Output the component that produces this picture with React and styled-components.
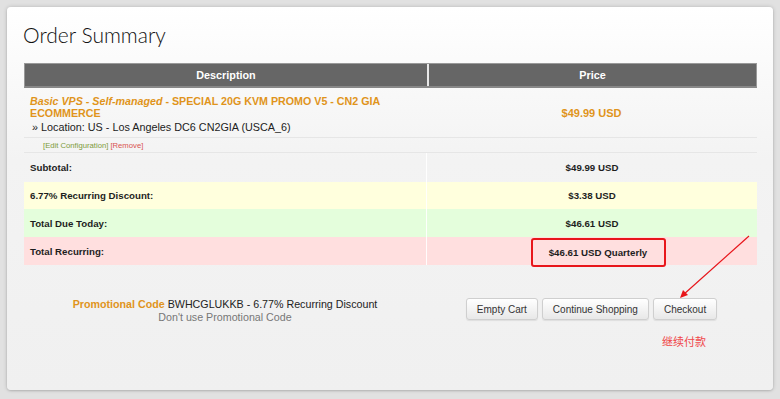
import React from 'react'
import styled, { createGlobalStyle } from 'styled-components'

const GlobalStyle = createGlobalStyle`
   html, body {
      margin: 0;
      padding: 0;
      background: #e1e1e1;
   }
   body {
      font-family: "Liberation Sans", Arial, sans-serif;
      color: #333;
   }
`

const Page = styled.div`
   padding: 7px 7px 9px 7px;
   height: 399px;
   box-sizing: border-box;
`

const Panel = styled.div`
   position: relative;
   height: 383px;
   box-sizing: border-box;
   padding: 15px 16px 0 17px;
   border-radius: 4px;
   background: linear-gradient(to bottom, #ffffff 0%, #f3f3f3 40%, #f0f0f0 100%);
   box-shadow: 0 0 4px rgba(0, 0, 0, 0.18), 0 1px 2px rgba(0, 0, 0, 0.12);
`

const Title = styled.h1`
   margin: 0 0 16px -1px;
   font-family: Lato, sans-serif;
   font-weight: 300;
   font-size: 21px;
   line-height: 25px;
   color: #111;
`

const Table = styled.div`
   display: flex;
   flex-direction: column;
`

const Row = styled.div`
   display: grid;
   grid-template-columns: 402px 1fr;
   height: ${p => p.h || 28}px;
   background: ${p => p.bg || 'transparent'};
   border-bottom: ${p => (p.line ? '1px solid #e6e6e6' : 'none')};
`

const HeadRow = styled.div`
   display: grid;
   grid-template-columns: 402px 1fr;
   height: 25px;
   border: 1px solid #999;
   border-bottom: 2px solid #888;
   box-sizing: border-box;
   margin-bottom: 1px;
`

const HeadCell = styled.div`
   background: #666;
   color: #fff;
   font-weight: bold;
   font-size: 10.8px;
   display: flex;
   align-items: center;
   justify-content: center;
   border-left: ${p => (p.right ? '2px solid #e8e8e8' : 'none')};
`

const Cell = styled.div`
   display: flex;
   align-items: center;
   justify-content: ${p => (p.center ? 'center' : 'flex-start')};
   padding: ${p => (p.center ? '0' : '0 6px')};
   border-left: ${p => (p.right ? '1px solid rgba(255,255,255,0.9)' : 'none')};
   font-size: 9.7px;
   font-weight: bold;
   color: #1e1e1e;
`

const ProductCell = styled.div`
   padding: 6px 6px 2px 6px;
`

const ProductName = styled.div`
   color: #e0941b;
   font-weight: bold;
   font-size: 10.7px;
   line-height: 12px;
   em {
      font-style: italic;
   }
`

const Location = styled.div`
   margin-top: 1px;
   padding-left: 2px;
   color: #222;
   font-size: 10.8px;
   line-height: 14px;
`

const PriceCell = styled.div`
   display: flex;
   align-items: center;
   justify-content: center;
   color: #e0941b;
   font-weight: bold;
   font-size: 11px;
`

const Actions = styled.div`
   padding: 0 0 0 19px;
   font-size: 7.7px;
   display: flex;
   align-items: center;
   gap: 2px;
`

const ActionLink = styled.span`
   color: ${p => (p.danger ? '#d9534f' : '#7d9b3b')};
`

const RecurringBox = styled.span`
   display: inline-flex;
   align-items: center;
   justify-content: center;
   width: 131px;
   height: 25px;
   margin: 1px 0 -2px 12px;
   align-self: flex-start;
   border: 2px solid #e8161b;
   border-radius: 3px;
   font-weight: bold;
`

const Bottom = styled.div`
   display: grid;
   grid-template-columns: 402px 1fr;
   margin-top: 33px;
`

const Promo = styled.div`
   text-align: center;
   font-size: 10.7px;
   line-height: 13px;
   color: #222;
`

const PromoLabel = styled.span`
   color: #e0941b;
   font-weight: bold;
`

const Muted = styled.div`
   color: #777;
`

const ButtonCol = styled.div`
   display: flex;
   flex-direction: column;
   align-items: center;
`

const Buttons = styled.div`
   display: flex;
   gap: 4px;
`

const Button = styled.button`
   height: 22px;
   padding: 0 10px;
   font-family: "Liberation Sans", Arial, sans-serif;
   font-size: 10px;
   color: #333;
   border: 1px solid #cfcfcf;
   border-radius: 3px;
   background: linear-gradient(to bottom, #ffffff 0%, #e8e8e8 100%);
   box-shadow: 0 1px 1px rgba(0, 0, 0, 0.08);
   cursor: pointer;
`

const Note = styled.div`
   align-self: stretch;
   display: flex;
   justify-content: flex-end;
   padding-right: 51px;
   margin-top: 13px;
   color: #f0474a;
   font-size: 11px;
   font-family: "Noto Sans CJK SC", sans-serif;
`

const Arrow = styled.svg`
   position: absolute;
   left: 670px;
   top: 228px;
   overflow: visible;
`

export default function App() {
   return (
      <Page>
         <GlobalStyle />
         <Panel>
            <Title>Order Summary</Title>
            <Table>
               <HeadRow>
                  <HeadCell>Description</HeadCell>
                  <HeadCell right>Price</HeadCell>
               </HeadRow>
               <Row h={48} line>
                  <ProductCell>
                     <ProductName>
                        <em>Basic VPS - Self-managed</em> - SPECIAL 20G KVM PROMO V5 - CN2 GIA ECOMMERCE
                     </ProductName>
                     <Location>» Location: US - Los Angeles DC6 CN2GIA (USCA_6)</Location>
                  </ProductCell>
                  <PriceCell>$49.99 USD</PriceCell>
               </Row>
               <Row h={14} line>
                  <Actions>
                     <ActionLink>[Edit Configuration]</ActionLink>
                     <ActionLink danger>[Remove]</ActionLink>
                  </Actions>
                  <div />
               </Row>
               <Row h={29}>
                  <Cell>Subtotal:</Cell>
                  <Cell center right>$49.99 USD</Cell>
               </Row>
               <Row h={27} bg="#ffffdd">
                  <Cell>6.77% Recurring Discount:</Cell>
                  <Cell center right>$3.38 USD</Cell>
               </Row>
               <Row h={28} bg="#e4fedc">
                  <Cell>Total Due Today:</Cell>
                  <Cell center right>$46.61 USD</Cell>
               </Row>
               <Row h={28} bg="#ffdfdf">
                  <Cell>Total Recurring:</Cell>
                  <Cell center right>
                     <RecurringBox>$46.61 USD Quarterly</RecurringBox>
                  </Cell>
               </Row>
            </Table>
            <Bottom>
               <Promo>
                  <PromoLabel>Promotional Code</PromoLabel> BWHCGLUKKB - 6.77% Recurring Discount
                  <Muted>Don't use Promotional Code</Muted>
               </Promo>
               <ButtonCol>
                  <Buttons>
                     <Button>Empty Cart</Button>
                     <Button>Continue Shopping</Button>
                     <Button>Checkout</Button>
                  </Buttons>
                  <Note>继续付款</Note>
               </ButtonCol>
            </Bottom>
            <Arrow width="80" height="70" viewBox="0 0 80 70">
               <line x1="72" y1="1" x2="6" y2="60" stroke="#e8161b" strokeWidth="1.2" />
               <polygon points="3,63 6,55 11,60" fill="#e8161b" />
            </Arrow>
         </Panel>
      </Page>
   )
}
